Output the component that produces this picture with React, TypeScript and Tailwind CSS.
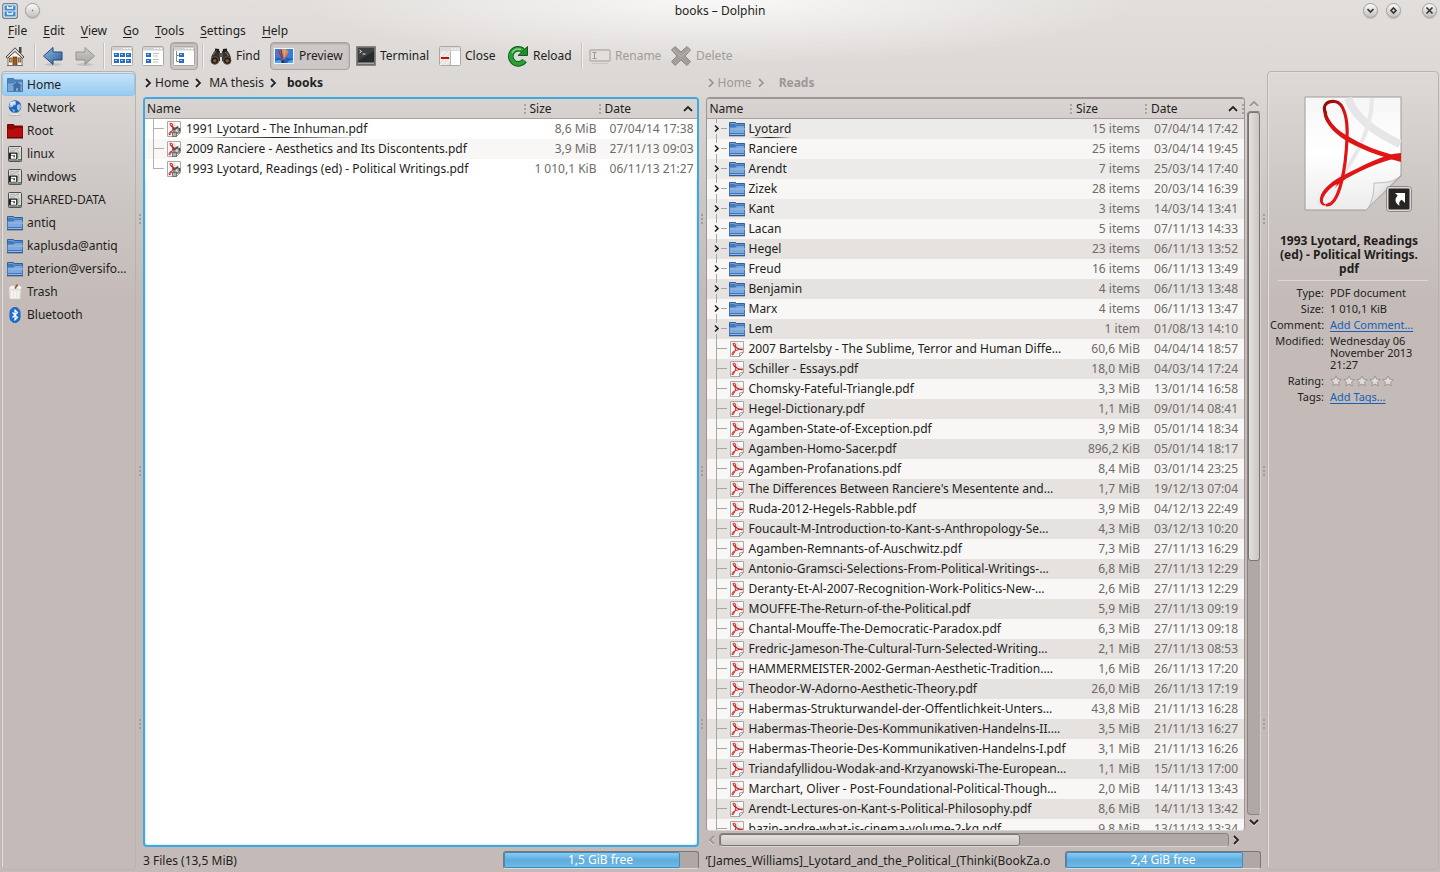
import React from "react";

type Row = { name: string; size: string; date: string; kind: "folder" | "pdf" | "pdflink" };

const leftRows: Row[] = [
  { name: "1991 Lyotard - The Inhuman.pdf", size: "8,6 MiB", date: "07/04/14 17:38", kind: "pdflink" },
  { name: "2009 Ranciere - Aesthetics and Its Discontents.pdf", size: "3,9 MiB", date: "27/11/13 09:03", kind: "pdflink" },
  { name: "1993 Lyotard, Readings (ed) - Political Writings.pdf", size: "1 010,1 KiB", date: "06/11/13 21:27", kind: "pdflink" },
];

const folder = (name: string, size: string, date: string): Row => ({ name, size, date, kind: "folder" });
const pdf = (name: string, size: string, date: string): Row => ({ name, size, date, kind: "pdf" });

const rightRows: Row[] = [
  folder("Lyotard", "15 items", "07/04/14 17:42"),
  folder("Ranciere", "25 items", "03/04/14 19:45"),
  folder("Arendt", "7 items", "25/03/14 17:40"),
  folder("Zizek", "28 items", "20/03/14 16:39"),
  folder("Kant", "3 items", "14/03/14 13:41"),
  folder("Lacan", "5 items", "07/11/13 14:33"),
  folder("Hegel", "23 items", "06/11/13 13:52"),
  folder("Freud", "16 items", "06/11/13 13:49"),
  folder("Benjamin", "4 items", "06/11/13 13:48"),
  folder("Marx", "4 items", "06/11/13 13:47"),
  folder("Lem", "1 item", "01/08/13 14:10"),
  pdf("2007 Bartelsby - The Sublime, Terror and Human Diffe…", "60,6 MiB", "04/04/14 18:57"),
  pdf("Schiller - Essays.pdf", "18,0 MiB", "04/03/14 17:24"),
  pdf("Chomsky-Fateful-Triangle.pdf", "3,3 MiB", "13/01/14 16:58"),
  pdf("Hegel-Dictionary.pdf", "1,1 MiB", "09/01/14 08:41"),
  pdf("Agamben-State-of-Exception.pdf", "3,9 MiB", "05/01/14 18:34"),
  pdf("Agamben-Homo-Sacer.pdf", "896,2 KiB", "05/01/14 18:17"),
  pdf("Agamben-Profanations.pdf", "8,4 MiB", "03/01/14 23:25"),
  pdf("The Differences Between Ranciere's Mesentente and…", "1,7 MiB", "19/12/13 07:04"),
  pdf("Ruda-2012-Hegels-Rabble.pdf", "3,9 MiB", "04/12/13 22:49"),
  pdf("Foucault-M-Introduction-to-Kant-s-Anthropology-Se…", "4,3 MiB", "03/12/13 10:20"),
  pdf("Agamben-Remnants-of-Auschwitz.pdf", "7,3 MiB", "27/11/13 16:29"),
  pdf("Antonio-Gramsci-Selections-From-Political-Writings-…", "6,8 MiB", "27/11/13 12:29"),
  pdf("Deranty-Et-Al-2007-Recognition-Work-Politics-New-…", "2,6 MiB", "27/11/13 12:29"),
  pdf("MOUFFE-The-Return-of-the-Political.pdf", "5,9 MiB", "27/11/13 09:19"),
  pdf("Chantal-Mouffe-The-Democratic-Paradox.pdf", "6,3 MiB", "27/11/13 09:18"),
  pdf("Fredric-Jameson-The-Cultural-Turn-Selected-Writing…", "2,1 MiB", "27/11/13 08:53"),
  pdf("HAMMERMEISTER-2002-German-Aesthetic-Tradition.…", "1,6 MiB", "26/11/13 17:20"),
  pdf("Theodor-W-Adorno-Aesthetic-Theory.pdf", "26,0 MiB", "26/11/13 17:19"),
  pdf("Habermas-Strukturwandel-der-Offentlichkeit-Unters…", "43,8 MiB", "21/11/13 16:28"),
  pdf("Habermas-Theorie-Des-Kommunikativen-Handelns-II.…", "3,5 MiB", "21/11/13 16:27"),
  pdf("Habermas-Theorie-Des-Kommunikativen-Handelns-I.pdf", "3,1 MiB", "21/11/13 16:26"),
  pdf("Triandafyllidou-Wodak-and-Krzyanowski-The-European…", "1,1 MiB", "15/11/13 17:00"),
  pdf("Marchart, Oliver - Post-Foundational-Political-Though…", "2,0 MiB", "14/11/13 13:43"),
  pdf("Arendt-Lectures-on-Kant-s-Political-Philosophy.pdf", "8,6 MiB", "14/11/13 13:42"),
  pdf("bazin-andre-what-is-cinema-volume-2-kg.pdf", "9,8 MiB", "13/11/13 13:34"),
];

/* ---------- small icons ---------- */

function FolderIcon() {
  return (
    <svg width="16" height="16" viewBox="0 0 16 16" className="shrink-0">
      <path d="M0.500 1.500h6l1 1h8v12h-15z" fill="#4679b8" stroke="#2f609f" />
      <path d="M1 2.500h5l1 1.500h8" fill="none" stroke="#7eabdf" strokeWidth="0.800" />
      <path d="M0.500 6h6l1.500-1.500h7.500v10h-15z" fill="#7fa9dc" stroke="#4478b8" />
      <path d="M1 7h15v2H1z" fill="#8fb6e6" opacity="0.700" />
      <path d="M1 12.500h14" stroke="#3f74b6" />
      <path d="M1 13.500h14" stroke="#94b9e6" />
      <path d="M0 14.800h16" stroke="#2b4e7d" />
    </svg>
  );
}

function HomeFolderIcon() {
  return (
    <svg width="16" height="16" viewBox="0 0 16 16" className="shrink-0">
      <path d="M0.500 1.500h6l1 1.500h8v11.500h-15z" fill="#4d84bf" stroke="#4377b0" />
      <path d="M0.500 6h6l1.500-1.500h7.500v10h-15z" fill="#7aa8da" stroke="#4a7fba" />
      <path d="M10 4.500l5 4.500h-1.500v5h-2.500v-3h-2v3h-2.500v-5h-1.500z" fill="#40709f" />
    </svg>
  );
}

function RedFolderIcon() {
  return (
    <svg width="16" height="16" viewBox="0 0 16 16" className="shrink-0">
      <path d="M0.500 1.500h6l1 1.500h8v11.500h-15z" fill="#8e0808" stroke="#700505" />
      <path d="M0.500 6h6l1.500-1.500h7.500v10h-15z" fill="#b80d0d" stroke="#870606" />
      <path d="M0 15h16" stroke="#4a0505" />
    </svg>
  );
}

function NetworkIcon() {
  return (
    <svg width="16" height="16" viewBox="0 0 16 16" className="shrink-0">
      <ellipse cx="8" cy="14.800" rx="6.500" ry="1" fill="#a9a5a3" />
      <ellipse cx="8" cy="14.200" rx="6" ry="0.800" fill="#f0eeee" />
      <circle cx="8" cy="6.500" r="6.300" fill="#2465b4" />
      <path d="M3 3c2-2 5-2.500 6-1.500l-1 2 -2 1 0 2-2 1-2 -1zM10 5l3-1 1 3-2 4-2-2zM5 9l3 1-1 2.500z" fill="#9cc4ea" />
      <ellipse cx="6" cy="3.500" rx="3" ry="2" fill="#ffffff" opacity="0.600" />
    </svg>
  );
}

function DriveIcon() {
  return (
    <svg width="16" height="16" viewBox="0 0 16 16" className="shrink-0">
      <rect x="1.500" y="0.500" width="13" height="15" rx="1" fill="#dcdcda" stroke="#4e4e4c" />
      <path d="M3 3.500c2-2 4-1 5 0l4-1.500M10.500 4.500c1.500 1 2 4 1 7M3 5h5" fill="none" stroke="#a3a3a0" />
      <rect x="2" y="6.500" width="8.500" height="7" rx="1" fill="#1e1e1e" />
      <path d="M4 8.500h4.500v3.500H4.500v-1.500h2" fill="none" stroke="#fff" strokeWidth="1.300" />
      <path d="M11 13.500h3" stroke="#2a9a2a" />
      <path d="M1.500 14.800h13" stroke="#666" />
    </svg>
  );
}

function TrashIcon() {
  return (
    <svg width="16" height="16" viewBox="0 0 16 16" className="shrink-0">
      <path d="M1.500 3h13l-0.800 12.500h-11.400z" fill="#e9e6e2" stroke="#c2beb9" />
      <path d="M2 3.500l3-2 4 1 4-1 1.500 2-1 2-5-1-4 1.500z" fill="#faf9f7" stroke="#cbc6bf" strokeWidth="0.600" />
      <path d="M10.500 0.500l-2.500 4" stroke="#9b5c1b" strokeWidth="1.600" />
      <path d="M5 7v7M8 7v7M11 7v7" stroke="#fff" />
    </svg>
  );
}

function BluetoothIcon() {
  return (
    <svg width="16" height="16" viewBox="0 0 16 16" className="shrink-0">
      <rect x="3" y="0.500" width="10" height="15" rx="5" fill="#1c6fd6" stroke="#1860bd" />
      <path d="M5.500 5.500l5 5-2.500 2.300V3.200l2.500 2.300-5 5" fill="none" stroke="#fff" strokeWidth="1.200" />
    </svg>
  );
}

function PdfIcon({ link }: { link: boolean }) {
  return (
    <svg width="16" height="16" viewBox="0 0 16 16" className="shrink-0">
      <path d="M1.500 0.500h13v10.500l-4 4.500h-9z" fill="#f8f8f8" stroke="#aaa8a6" />
      <path d="M8 1.500c0 3 3 5 6 6" fill="none" stroke="#e2e2e2" strokeWidth="1.500" />
      <path
        d="M4 3c0-1.300 2-1 2.500 0.500 0.700 2.500-0.500 7-2 9.500-0.800 1.200-2 0.500-1.300-0.800C4.500 10 9 8.500 14 8"
        fill="none"
        stroke="#d43c3c"
        strokeWidth="1.100"
      />
      <path d="M4 3.200C5.500 6 9 8 13.500 8.800" fill="none" stroke="#c92020" strokeWidth="1.300" />
      <path d="M14.500 11l-4 4.500v-3.500z" fill="#fff" stroke="#8a8886" strokeWidth="0.800" />
      {link && (
        <g>
          <circle cx="10.500" cy="9.500" r="3.600" fill="#8a8785" />
          <path d="M7 7.500l2 1 3-3M13.500 7l0.500 3M7.500 14l2-2.500" stroke="#4a4745" fill="none" strokeWidth="1.400" />
          <circle cx="10.800" cy="9.500" r="1.500" fill="#d4d2d0" />
          <rect x="6.500" y="11.500" width="4" height="4" fill="#b1aeac" stroke="#5c5957" strokeWidth="0.700" />
        </g>
      )}
    </svg>
  );
}

function Chevron({ dir, color }: { dir: "right" | "left" | "up" | "down"; color: string }) {
  const d = {
    right: "M3 1l4 4-4 4",
    left: "M7 1l-4 4 4 4",
    up: "M1 7l4-4 4 4",
    down: "M1 3l4 4 4-4",
  }[dir];
  return (
    <svg width="10" height="10" viewBox="0 0 10 10" className="shrink-0">
      <path d={d} transform="translate(0 1)" fill="none" stroke="#fff" strokeOpacity="0.700" strokeWidth="1.600" />
      <path d={d} fill="none" stroke={color} strokeWidth="1.800" />
    </svg>
  );
}

/* ---------- toolbar icons ---------- */

function HouseIcon() {
  return (
    <svg width="22" height="22" viewBox="0 0 22 22" className="shrink-0">
      <path d="M4 11v9.500h14V11l-7-7z" fill="#f8f5ee" stroke="#77726c" />
      <rect x="15" y="2" width="2.500" height="6" fill="#4a4846" />
      <path d="M2 12L11 2.800l9 9.200-1.500 1.200L11 6.500l-7.500 6.700z" fill="#dcdad7" stroke="#454341" />
      <rect x="9" y="12" width="4" height="8.500" fill="#9a5a20" stroke="#5b3310" strokeWidth="0.700" />
      <rect x="5.500" y="13" width="2.500" height="4" fill="#d8a050" stroke="#6b4a20" strokeWidth="0.700" />
      <rect x="14.300" y="13" width="2.500" height="4" fill="#d8a050" stroke="#6b4a20" strokeWidth="0.700" />
      <path d="M3 20.500h16" stroke="#6f6c69" />
    </svg>
  );
}

function ArrowIcon({ back }: { back: boolean }) {
  const id = back ? "arrow-back" : "arrow-forward";
  return (
    <svg width="22" height="22" viewBox="0 0 22 22" className="shrink-0">
      <defs>
        <linearGradient id={id} x1="0" y1="0" x2={back ? "1" : "0"} y2="1">
          <stop offset="0" stopColor={back ? "#8fbae6" : "#cfcdcb"} />
          <stop offset="1" stopColor={back ? "#2d5c94" : "#a5a29f"} />
        </linearGradient>
      </defs>
      <ellipse cx="11" cy="19.500" rx="8" ry="1.500" fill="#000" opacity="0.120" />
      <path
        d={back ? "M1.500 11L11 2.500V7h9v8h-9v4.500z" : "M20.500 11L11 2.500V7H2v8h9v4.500z"}
        fill={`url(#${id})`}
        stroke={back ? "#264b78" : "#95928f"}
        strokeLinejoin="round"
      />
    </svg>
  );
}

function Tile({ x, y }: { x: number; y: number }) {
  return (
    <g>
      <rect x={x} y={y} width="5" height="4" fill="#2a6cc4" />
      <rect x={x + 1} y={y + 1} width="2" height="1" fill="#a9d0f7" />
    </g>
  );
}

function ViewIcon({ mode }: { mode: "icons" | "details" | "tree" }) {
  return (
    <svg width="22" height="20" viewBox="0 0 22 20" className="shrink-0">
      <rect x="0.500" y="0.500" width="21" height="19" rx="1" fill="#fff" stroke="#aaa7a4" />
      <rect x="1" y="1" width="20" height="3.500" fill="#d3d1cf" />
      <path d="M12 2.500h2M15 2.500h2M18 2.500h2" stroke="#fff" />
      {mode === "icons" && (
        <g>
          <Tile x={3} y={7} />
          <Tile x={9} y={7} />
          <Tile x={15} y={7} />
          <Tile x={3} y={13} />
          <Tile x={9} y={13} />
          <Tile x={15} y={13} />
        </g>
      )}
      {mode === "details" && (
        <g>
          <Tile x={4} y={7} />
          <Tile x={4} y={13} />
          <path d="M11 7.500h6M11 10h5M11 13.500h6M11 16h5" stroke="#c1bfbd" />
        </g>
      )}
      {mode === "tree" && (
        <g>
          <Tile x={6} y={7} />
          <Tile x={6} y={13} />
          <path d="M3.500 5v10.500H6M3.500 9.500H6" stroke="#8c8a88" fill="none" />
        </g>
      )}
    </svg>
  );
}

function BinocularsIcon() {
  return (
    <svg width="22" height="22" viewBox="0 0 22 22" className="shrink-0">
      <path d="M6 5l4 1v10l-4 2-5-3c0-4 2-8 5-10zM16 5l-4 1v10l4 2 5-3c0-4-2-8-5-10z" fill="#33302e" />
      <path d="M5 5l4 0.500M17 5l-4 0.500" stroke="#1d1b1a" strokeWidth="3" />
      <rect x="9" y="8" width="4" height="4" fill="#55514e" />
      <path d="M3 10c1-2 2-3 3.500-4M15 7c2 1 3 3 3.500 4" stroke="#8a8683" fill="none" />
      <circle cx="4.800" cy="15.500" r="3.800" fill="#1d1b1a" stroke="#5e5955" />
      <circle cx="17.200" cy="15.500" r="3.800" fill="#1d1b1a" stroke="#5e5955" />
      <circle cx="4.800" cy="15.800" r="1.800" fill="#a04f22" />
      <circle cx="17.200" cy="15.800" r="1.800" fill="#a04f22" />
    </svg>
  );
}

function PreviewIcon() {
  return (
    <svg width="20" height="16" viewBox="0 0 20 16" className="shrink-0">
      <rect x="0.500" y="0.500" width="19" height="15" fill="#2b7fe6" stroke="#f5f5f5" />
      <path d="M1 11c5-2 12-2 18 0v4H1z" fill="#1f5fc0" />
      <path d="M1 13c4-2 7-1 9 2H1zM13 15c1-2 3-3 6-3v3z" fill="#4aa5f4" />
      <path d="M2.500 4.500C3 0 14.500 0 15.500 4.500c0 3-4 5-5.500 7.500H8C6.500 9.500 2.500 7.500 2.500 4.500z" fill="#9c5f80" />
      <path d="M7 1.300c3-0.800 6 0 7.500 1.700 0 3-3 5-4.500 8z" fill="#d08a58" />
      <path d="M9.500 1.200l2.500 0.600-2 8z" fill="#e0b060" />
      <path d="M4.500 2.500l4 9M7 1.500l1.500 9" stroke="#5a3f8a" />
      <rect x="7.500" y="12.500" width="2.500" height="2.500" fill="#3a2a2a" />
    </svg>
  );
}

function TerminalIcon() {
  return (
    <svg width="20" height="20" viewBox="0 0 20 20" className="shrink-0">
      <rect x="0.500" y="0.500" width="19" height="19" fill="#6d6d6b" stroke="#898785" />
      <rect x="2" y="2" width="16" height="14" fill="#2a2c2c" />
      <path d="M2 2h16v3L2 15z" fill="#3d4040" />
      <path d="M3.500 4l2 1.500-2 1.500M6.500 8h3" stroke="#eee" fill="none" />
      <path d="M2 17.500h16" stroke="#a5a5a3" />
    </svg>
  );
}

function CloseSplitIcon() {
  return (
    <svg width="22" height="20" viewBox="0 0 22 20" className="shrink-0">
      <rect x="0.500" y="0.500" width="21" height="19" rx="1" fill="#fff" stroke="#aaa7a4" />
      <rect x="1" y="1" width="20" height="4" fill="#dbd9d7" />
      <path d="M12 3h2M15 3h2M18 3h2" stroke="#fff" />
      <rect x="1" y="5" width="10" height="14" fill="#e6e3e1" />
      <path d="M1 10l5-5M1 15l10-10M1 19.500l10-10M6 19l5-5" stroke="#fff" />
      <path d="M11.500 5v14" stroke="#b5b3b1" />
      <rect x="2" y="11" width="8" height="2" fill="#c90d0d" />
    </svg>
  );
}

function ReloadIcon() {
  return (
    <svg width="22" height="22" viewBox="0 0 22 22" className="shrink-0">
      <path d="M17.500 15.500A7.500 7.500 0 1 1 16 5.500" fill="none" stroke="#0d5a1a" strokeWidth="5.600" />
      <path d="M20.500 1.500v9h-9.500z" fill="#1f8f2c" stroke="#0d5a1a" />
      <path d="M17.500 15.500A7.500 7.500 0 1 1 16 5.500" fill="none" stroke="#27a235" strokeWidth="3.800" />
      <path d="M5 8A7 7 0 0 1 14 4.500" fill="none" stroke="#8ad98e" strokeWidth="1.400" />
    </svg>
  );
}

function RenameIcon() {
  return (
    <svg width="22" height="18" viewBox="0 0 22 18" className="shrink-0">
      <rect x="1" y="3" width="20" height="11" rx="1" fill="#e2dfdd" stroke="#b3b0ad" strokeWidth="1.400" />
      <path d="M3.500 5.500h4M3.500 11.500h4M5.500 5.500v6" stroke="#9b9895" fill="none" />
      <path d="M3 16.500h16" stroke="#c9c5c2" />
    </svg>
  );
}

function DeleteIcon() {
  return (
    <svg width="22" height="22" viewBox="0 0 22 22" className="shrink-0">
      <path
        d="M1.500 5L5 1.500 11 7l6-5.500L20.500 5 15 11l5.500 5.500L17 20.500 11 15l-6 5.500L1.500 16.500 7 11z"
        fill="#a29f9c"
        stroke="#8b8885"
      />
      <path d="M3 5l8 6.500L19 5" stroke="#bab7b4" fill="none" />
    </svg>
  );
}

function AppIcon() {
  return (
    <svg width="16" height="16" viewBox="0 0 16 16" className="shrink-0">
      <rect x="0.700" y="0.700" width="14.600" height="14.600" rx="2" fill="#eaf3f9" stroke="#6d7d8a" strokeWidth="1.200" />
      <rect x="2.500" y="2.500" width="11" height="5" fill="#3f88cc" />
      <rect x="2.500" y="8.500" width="11" height="5" fill="#3f88cc" />
      <path d="M5.500 3v2h5v-2M5.500 9v2h5v-2" fill="none" stroke="#fff" strokeWidth="1.300" />
    </svg>
  );
}

function RoundButton({ label, children }: { label: string; children?: React.ReactNode }) {
  return (
    <button
      aria-label={label}
      className="flex size-[15px] shrink-0 items-center justify-center rounded-full border border-[#a29f9c] bg-linear-to-b from-[#fbfafa] to-[#c4c1be] shadow-[0_1px_1px_#8f8c8966]"
    >
      <svg width="9" height="9" viewBox="0 0 9 9" fill="none" stroke="#333" strokeWidth="1.600">
        {children}
      </svg>
    </button>
  );
}

/* ---------- pieces ---------- */

function Separator() {
  return <span className="h-[26px] w-0.5 shrink-0 border-l border-[#c4c0bd] bg-[#f3f1f0]" />;
}

function TreeLines({ row, last, active }: { row: Row; last: boolean; active: boolean }) {
  const isFolder = row.kind === "folder";
  if (active) {
    return (
      <svg width="20" height="20" viewBox="0 0 20 20" className="shrink-0">
        <path d={last ? "M8.500 0V10" : "M8.500 0V20"} stroke="#b3b0ae" />
        <path d="M8.500 9.500H19" stroke="#b3b0ae" />
      </svg>
    );
  }
  return (
    <svg width="20" height="20" viewBox="0 0 20 20" className="shrink-0">
      {isFolder ? (
        <g fill="none">
          <path d="M8.500 0V4M8.500 15V20M13 9.500H19" stroke="#a8a5a3" />
          <path d="M7 6.500l3 3-3 3" stroke="#222" strokeWidth="1.600" />
        </g>
      ) : (
        <path d="M8.500 0V20M8.500 9.500H19" stroke="#a8a5a3" fill="none" />
      )}
    </svg>
  );
}

function Dots() {
  return <span aria-hidden="true" className="h-2.5 w-px border-l-2 border-dotted border-[#a8a3a0]" />;
}

function FileTable({ rows, active, label }: { rows: Row[]; active: boolean; label: string }) {
  return (
    <table aria-label={label} className="w-full table-fixed border-collapse">
      <colgroup>
        <col />
        <col className="w-[75px]" />
        <col className={active ? "w-[98px]" : "w-[99px]"} />
      </colgroup>
      <thead>
        <tr className="h-[19px] border-b border-[#a8a29e] bg-linear-to-b from-[#d8d4d1] to-[#d5d0cd]">
          <th className={active ? "p-0 pl-0.5 text-left font-normal" : "p-0 pl-[3px] text-left font-normal"}>Name</th>
          <th className="p-0 text-left font-normal">
            <span className="flex h-[19px] items-center gap-1">
              <Dots />
              Size
            </span>
          </th>
          <th className="p-0 text-left font-normal">
            <span className={active ? "flex h-[19px] items-center gap-1 pr-1" : "flex h-[19px] items-center gap-1"}>
              <Dots />
              <span className="flex-1">Date</span>
              <Chevron dir="up" color="#222" />
              {!active && <Dots />}
            </span>
          </th>
        </tr>
      </thead>
      <tbody>
        {rows.map((row, i) => {
          const odd = i % 2 === 1;
          const bg = active ? (odd ? "bg-[#f8f7f6]" : "bg-white") : odd ? "bg-[#f8f7f5]" : i < 5 ? "bg-[#ecebea]" : "bg-[#e5e2e0]";
          return (
            <tr key={row.name} className={`h-5 ${bg}`}>
              <td className={active ? "p-0" : "p-0 pl-px"}>
                <span className="flex h-5 items-center whitespace-nowrap">
                  <TreeLines row={row} last={i === rows.length - 1} active={active} />
                  <span className="flex w-[21px] pl-px">
                    {row.kind === "folder" ? <FolderIcon /> : <PdfIcon link={row.kind === "pdflink"} />}
                  </span>
                  <span
                    className={
                      i === 0
                        ? "bg-linear-to-r from-transparent via-[#222] to-transparent bg-[length:100%_1px] bg-bottom bg-no-repeat leading-[18px]"
                        : "leading-[18px]"
                    }
                  >
                    {row.name}
                  </span>
                </span>
              </td>
              <td
                className={
                  active
                    ? "p-0 pr-0.5 text-right whitespace-nowrap text-[#6f6b69]"
                    : "p-0 pr-[5px] text-right whitespace-nowrap text-[#6f6b69]"
                }
              >
                {row.size}
              </td>
              <td
                className={
                  active
                    ? "p-0 pr-[3px] text-right whitespace-nowrap text-[#6f6b69]"
                    : "p-0 pr-1.5 text-right whitespace-nowrap text-[#6f6b69]"
                }
              >
                {row.date}
              </td>
            </tr>
          );
        })}
      </tbody>
    </table>
  );
}

function Splitter({ narrow = false }: { narrow?: boolean }) {
  return (
    <div
      className={
        narrow
          ? "flex w-1.5 shrink-0 flex-col items-center justify-around py-[22px]"
          : "flex w-[7px] shrink-0 flex-col items-center justify-around py-[22px]"
      }
    >
      <span className="h-2.5 border-l-2 border-dotted border-[#a39e9b]" />
      <span className="h-2.5 border-l-2 border-dotted border-[#a39e9b]" />
      <span className="h-2.5 border-l-2 border-dotted border-[#a39e9b]" />
    </div>
  );
}

function Breadcrumb({ parts, active }: { parts: string[]; active: boolean }) {
  const color = active ? "#222" : "#9c9895";
  return (
    <nav aria-label={parts.join(" / ")} className="flex h-[26px] shrink-0 items-center pb-0.5">
      {parts.map((part, i) => {
        const current = i === parts.length - 1;
        return (
          <span key={part} className="flex items-center">
            <Chevron dir="right" color={color} />
            <a
              href={`#${part}`}
              className={`${current ? (active ? "pl-2 font-bold" : "pl-3 font-bold") : "pr-1"} ${active ? "text-[#222]" : "text-[#9c9895]"} ${current ? "ml-px" : i === 0 ? "ml-0.5" : "ml-1.5"}`}
            >
              {part}
            </a>
          </span>
        );
      })}
    </nav>
  );
}

function StatusBar({ text, free }: { text: string; free: string }) {
  return (
    <div className="flex h-[25px] shrink-0 items-center justify-between">
      <span className="pt-0.5 whitespace-nowrap">{text}</span>
      <div
        role="progressbar"
        aria-label={free}
        aria-valuenow={91}
        className="relative h-[18px] w-[196px] shrink-0 rounded-[3px] border border-[#7d7774] border-b-[#dedad8] bg-[#b0a8a5]"
      >
        <div className="h-full w-[91%] rounded-[2px] border border-[#3b8cc4] bg-linear-to-b from-[#8ccaf0] via-[#5cacde] to-[#6fb9e6]" />
        <span className="absolute inset-0 flex items-center justify-center text-white">{free}</span>
      </div>
    </div>
  );
}

const places: { name: string; icon: React.ReactNode }[] = [
  { name: "Home", icon: <HomeFolderIcon /> },
  { name: "Network", icon: <NetworkIcon /> },
  { name: "Root", icon: <RedFolderIcon /> },
  { name: "linux", icon: <DriveIcon /> },
  { name: "windows", icon: <DriveIcon /> },
  { name: "SHARED-DATA", icon: <DriveIcon /> },
  { name: "antiq", icon: <FolderIcon /> },
  { name: "kaplusda@antiq", icon: <FolderIcon /> },
  { name: "pterion@versifo…", icon: <FolderIcon /> },
  { name: "Trash", icon: <TrashIcon /> },
  { name: "Bluetooth", icon: <BluetoothIcon /> },
];

function LargePdf() {
  return (
    <svg width="98" height="116" viewBox="0 0 98 116">
      <defs>
        <linearGradient id="paper" x1="0" y1="0" x2="0" y2="1">
          <stop offset="0" stopColor="#f6f6f6" />
          <stop offset="0.500" stopColor="#ffffff" />
          <stop offset="1" stopColor="#ececec" />
        </linearGradient>
        <linearGradient id="ribbon" x1="0" y1="0" x2="0.300" y2="1">
          <stop offset="0" stopColor="#8d0808" />
          <stop offset="0.350" stopColor="#d81414" />
          <stop offset="1" stopColor="#e41616" />
        </linearGradient>
        <linearGradient id="curl" x1="0" y1="0" x2="1" y2="1">
          <stop offset="0" stopColor="#ffffff" />
          <stop offset="0.450" stopColor="#e6e6e6" />
          <stop offset="0.700" stopColor="#a8a8a8" />
        </linearGradient>
      </defs>
      <path d="M1 1h96v79L62 114H1z" fill="url(#paper)" stroke="#9f9c9a" />
      <path d="M44 2c6 18 26 34 52 46" fill="none" stroke="#e6e6e8" strokeWidth="8" />
      <path d="M68 2c0 34-20 70-54 106" fill="none" stroke="#e8e8ea" strokeWidth="4" />
      <path d="M22 18C17 9 24 4.500 31 5.500c9 1 13 18 12 36C42 70 36 110 22 109" fill="none" stroke="url(#ribbon)" strokeWidth="3.200" />
      <path d="M22 9c-1 14 10 24 20 30 16 10 34 17 55 22v5C76 60 54 53 38 42 24 32 15 18 22 9z" fill="url(#ribbon)" />
      <path d="M97 57v5c-14 1-30 8-46 16-8 4-14 7-20 14-5 5-8 12-6 16-6 4-10 0-9-6 2-10 14-18 24-23C58 70 80 58 97 57z" fill="#e01515" />
      <path d="M19 103c2-6 8-12 14-15-3 6-5 12-8 18-3 4-7 2-6-3z" fill="#f2f2f2" />
      <path d="M97 79c-6 7-16 8-27 8 0 10-2 22-8 27z" fill="url(#curl)" stroke="#b1b1b1" strokeWidth="0.800" />
    </svg>
  );
}

const menuItems = ["File", "Edit", "View", "Go", "Tools", "Settings", "Help"];

export default function App() {
  return (
    <div className="flex h-screen flex-col overflow-hidden bg-[#c4bbb8] bg-[radial-gradient(420px_64px_at_50%_0,#ffffffcc,#ffffff00),linear-gradient(to_bottom,#e1dedb_0,#dcd8d5_80px,#cbc5c2_210px,#c4bbb8_300px)] bg-no-repeat font-['Noto_Sans',sans-serif] text-xs leading-4 text-[#221e1c]">
      {/* Title bar */}
      <header className="grid h-[21px] shrink-0 grid-cols-[1fr_auto_1fr] items-center px-0.5">
        <div className="flex items-center gap-[7px]">
          <AppIcon />
          <RoundButton label="On all desktops">
            <circle cx="4.500" cy="4.500" r="0.300" strokeWidth="0.800" />
          </RoundButton>
        </div>
        <h1>books – Dolphin</h1>
        <div className="flex items-center justify-end pr-px">
          <span className="flex gap-2 pr-[21px]">
            <RoundButton label="Minimize">
              <path d="M1.500 3l3 3 3-3" />
            </RoundButton>
            <RoundButton label="Maximize">
              <path d="M4.500 2l2.500 2.500-2.500 2.500L2 4.500z" />
            </RoundButton>
          </span>
          <RoundButton label="Close window">
            <path d="M1.500 1.500l6 6M7.500 1.500l-6 6" />
          </RoundButton>
        </div>
      </header>

      {/* Menu bar */}
      <nav aria-label="Menu" className="flex h-5 shrink-0 items-center">
        {menuItems.map((m) => (
          <button key={m} className="px-2">
            <span className="underline underline-offset-2">{m[0]}</span>
            {m.slice(1)}
          </button>
        ))}
      </nav>

      {/* Toolbar */}
      <div role="toolbar" aria-label="Main toolbar" className="flex h-[30px] shrink-0 items-center">
        <button aria-label="Home" className="flex w-[34px] pl-1">
          <HouseIcon />
        </button>
        <Separator />
        <button aria-label="Back" className="flex w-[38px] pl-1.5">
          <ArrowIcon back />
        </button>
        <button aria-label="Forward" className="flex w-[29px]">
          <ArrowIcon back={false} />
        </button>
        <Separator />
        <button aria-label="Icons" className="flex w-[30px] justify-end pr-0.5">
          <ViewIcon mode="icons" />
        </button>
        <button aria-label="Compact" className="flex w-[35px] justify-center">
          <ViewIcon mode="details" />
        </button>
        <button
          aria-label="Details"
          aria-pressed="true"
          className="mr-1 flex h-7 w-7 items-center justify-center rounded border border-[#a8a3a0] bg-[#cdc8c5] shadow-[inset_0_1px_2px_#8a868388]"
        >
          <ViewIcon mode="tree" />
        </button>
        <Separator />
        <button className="flex w-[66px] items-center gap-1 pl-1.5">
          <BinocularsIcon />
          Find
        </button>
        <button
          aria-pressed="true"
          className="flex h-7 w-20 items-center gap-[5px] rounded border border-[#a8a3a0] bg-[#cdc8c5] pl-[3px] shadow-[inset_0_1px_2px_#8a868388]"
        >
          <PreviewIcon />
          Preview
        </button>
        <button className="flex w-[83px] items-center gap-1 pl-1.5">
          <TerminalIcon />
          Terminal
        </button>
        <button className="flex w-[68px] items-center gap-1 pl-1.5">
          <CloseSplitIcon />
          Close
        </button>
        <button className="flex w-[80px] items-center gap-1 pl-1.5">
          <ReloadIcon />
          Reload
        </button>
        <Separator />
        <button disabled className="flex w-[81px] items-center gap-1 pl-1.5 text-[#a09c99]">
          <RenameIcon />
          Rename
        </button>
        <button disabled className="flex items-center gap-1 pl-1.5 text-[#a09c99]">
          <DeleteIcon />
          Delete
        </button>
      </div>

      <main className="flex min-h-0 flex-1 pl-px">
        {/* Places */}
        <aside className="mb-0.5 w-[135px] shrink-0 rounded border border-[#b8b3b0] shadow-[inset_1px_1px_0_#e4e0de]">
          <ul className="pt-px">
            {places.map((p, i) => (
              <li key={p.name}>
                <a
                  href={`#${p.name}`}
                  className={
                    i === 0
                      ? "flex h-[23px] items-center gap-1 rounded-[3px] border border-[#8fc6ec] bg-linear-to-b from-[#c3e3f9] to-[#98ccf0] pl-1"
                      : "flex h-[23px] items-center gap-1 border border-transparent pl-1"
                  }
                >
                  {p.icon}
                  <span className="whitespace-nowrap">{p.name}</span>
                </a>
              </li>
            ))}
          </ul>
        </aside>
        <Splitter />

        {/* Left view */}
        <section className="flex min-w-0 flex-1 flex-col">
          <Breadcrumb parts={["Home", "MA thesis", "books"]} active />
          <div className="min-h-0 flex-1 overflow-hidden rounded border-2 border-[#3fa9df] bg-white shadow-[inset_0_0_2px_#7cc8ee]">
            <FileTable rows={leftRows} active label="books" />
          </div>
          <StatusBar text="3 Files (13,5 MiB)" free="1,5 GiB free" />
        </section>
        <Splitter />

        {/* Right view */}
        <section className="flex min-w-0 flex-1 flex-col">
          <Breadcrumb parts={["Home", "Reads"]} active={false} />
          <div className="flex min-h-0 flex-1">
            <div className="flex min-w-0 flex-1 flex-col">
              <div className="min-h-0 flex-1 overflow-hidden rounded border border-t-2 border-[#9c9794] border-b-[#d8d4d2] bg-[#f8f7f5]">
                <FileTable rows={rightRows} active={false} label="Reads" />
              </div>
              <div className="flex h-4 shrink-0 items-end gap-0.5">
                <button aria-label="Scroll left" className="pb-0.5 pl-px">
                  <Chevron dir="left" color="#9c9794" />
                </button>
                <div className="h-3.5 flex-1 rounded border border-[#8a8481] border-b-[#d8d4d2] bg-[#b0a8a5]">
                  <div className="h-full w-[59%] rounded-[3px] border border-[#7a7572] bg-linear-to-b from-[#e3e0de] to-[#cbc6c3]" />
                </div>
                <button aria-label="Scroll right" className="pr-1 pb-0.5">
                  <Chevron dir="right" color="#222" />
                </button>
              </div>
            </div>
            <div className="flex w-4 shrink-0 flex-col items-center gap-0.5 pb-5 pl-px">
              <button aria-label="Scroll up" className="flex h-3 items-end">
                <Chevron dir="up" color="#9c9794" />
              </button>
              <div className="w-3.5 flex-1 rounded border border-[#8a8481] border-r-[#d8d4d2] bg-[#b0a8a5]">
                <div className="h-[64%] w-full rounded-[3px] border border-[#7a7572] bg-linear-to-r from-[#e3e0de] to-[#cbc6c3]" />
              </div>
              <button aria-label="Scroll down">
                <Chevron dir="down" color="#222" />
              </button>
            </div>
          </div>
          <StatusBar text="‘[James_Williams]_Lyotard_and_the_Political_(Thinki(BookZa.o" free="2,4 GiB free" />
        </section>
        <Splitter narrow />

        {/* Information */}
        <aside className="mr-px mb-0.5 flex w-[172px] shrink-0 flex-col items-center rounded border border-[#b8b3b0] pt-6 shadow-[inset_1px_1px_0_#e4e0de]">
          <div className="relative">
            <LargePdf />
            <svg width="26" height="26" viewBox="0 0 26 26" className="absolute -right-2.5 bottom-0">
              <rect x="0.500" y="0.500" width="25" height="25" rx="3" fill="#dcdad8" stroke="#8a8785" />
              <rect x="2.500" y="2.500" width="21" height="21" rx="1" fill="#272523" />
              <path d="M9 7h10v10l-3.200-3.200c-2.500 1.200-3 3-2.300 6-5-3-5-7.500-1.700-10z" fill="#fff" />
            </svg>
          </div>
          <h2 className="mt-[22px] pr-2 text-center font-bold leading-[14px]">
            1993 Lyotard, Readings
            <br />
            (ed) - Political Writings.
            <br />
            pdf
          </h2>
          <hr className="my-1 w-[150px] border-[#dcd8d6]" />
          <dl className="grid w-full grid-cols-[54px_1fr] gap-x-1.5 gap-y-1 pt-0.5 pl-0.5 text-[11px] leading-3 whitespace-nowrap">
            <dt className="text-right">Type:</dt>
            <dd>PDF document</dd>
            <dt className="text-right">Size:</dt>
            <dd>1 010,1 KiB</dd>
            <dt className="text-right">Comment:</dt>
            <dd>
              <a href="#comment" className="text-[#1760b5] underline underline-offset-2">
                Add Comment…
              </a>
            </dd>
            <dt className="text-right">Modified:</dt>
            <dd>
              Wednesday 06
              <br />
              November 2013
              <br />
              21:27
            </dd>
            <dt className="text-right">Rating:</dt>
            <dd className="flex h-3 items-center gap-px">
              {[1, 2, 3, 4, 5].map((n) => (
                <svg key={n} width="12" height="12" viewBox="0 0 12 12">
                  <path
                    d="M6 0.800l1.600 3.300 3.700 0.500-2.700 2.500 0.700 3.700L6 9.100l-3.300 1.700 0.700-3.700L0.700 4.600l3.700-0.500z"
                    fill="#dedbd9"
                    stroke="#979290"
                    strokeWidth="0.900"
                    strokeLinejoin="round"
                  />
                </svg>
              ))}
            </dd>
            <dt className="text-right">Tags:</dt>
            <dd>
              <a href="#tags" className="text-[#1760b5] underline underline-offset-2">
                Add Tags…
              </a>
            </dd>
          </dl>
        </aside>
      </main>
    </div>
  );
}
